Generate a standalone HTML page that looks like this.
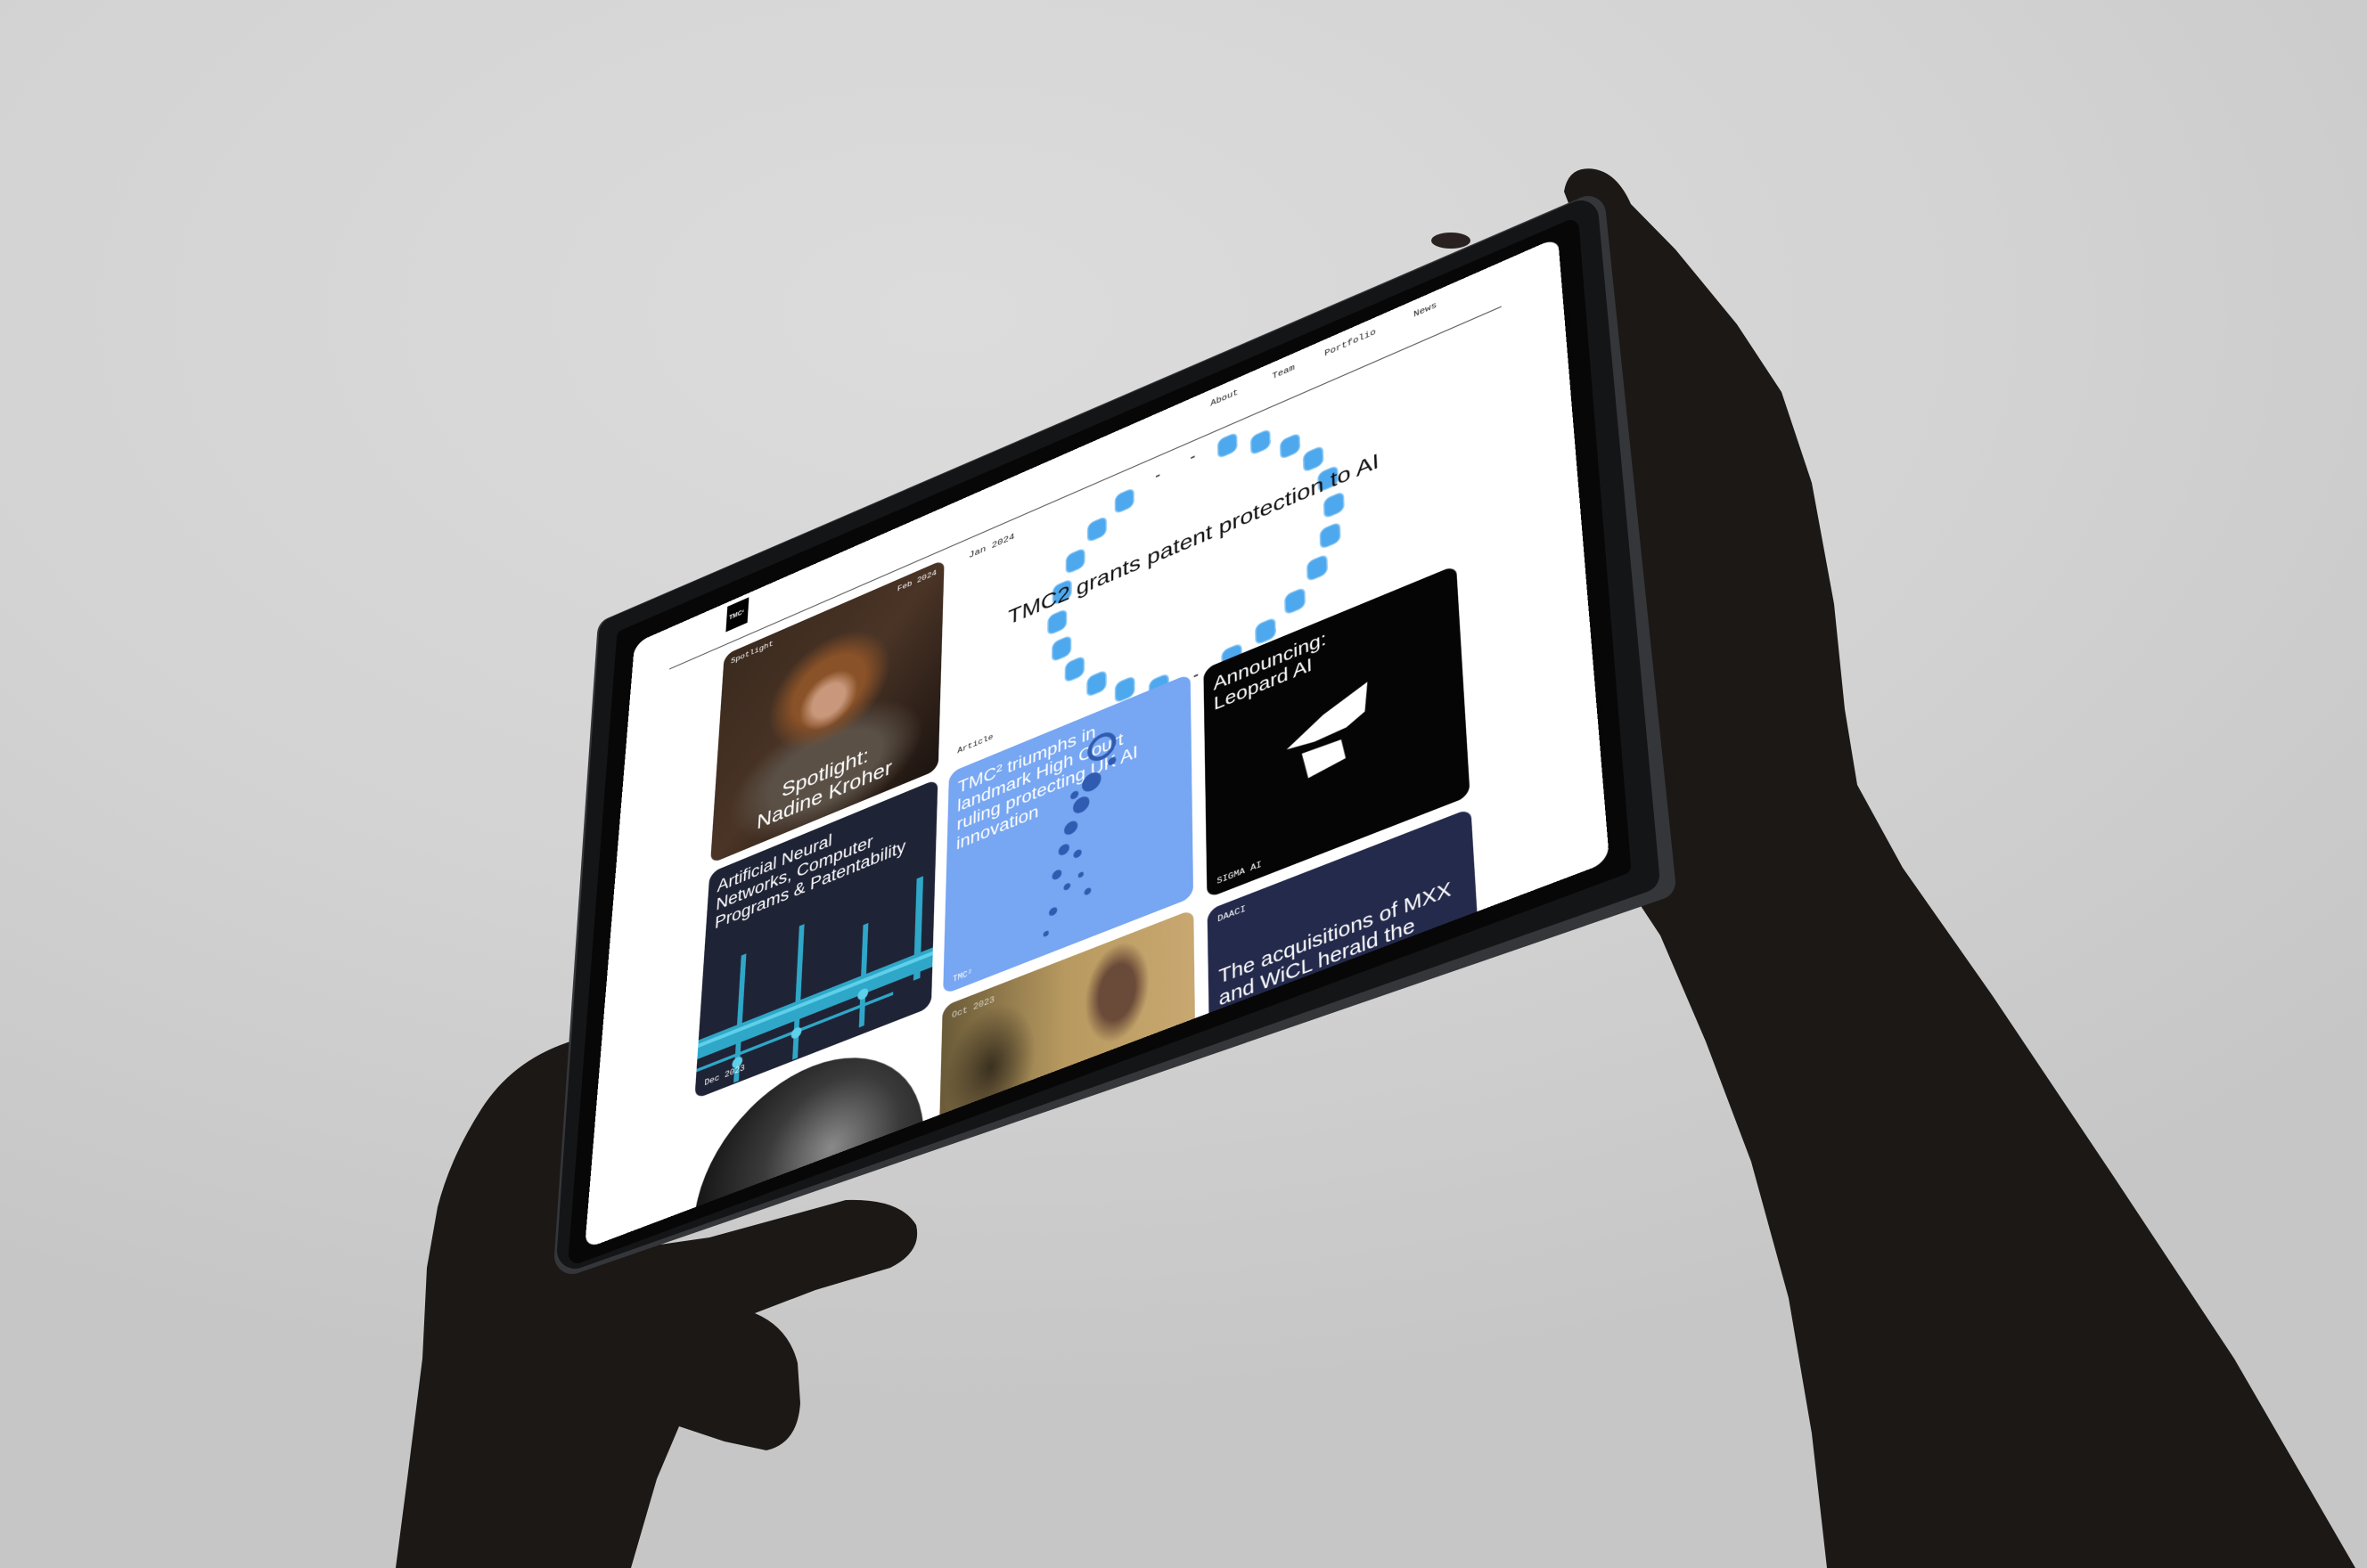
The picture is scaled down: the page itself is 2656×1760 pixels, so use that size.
<!DOCTYPE html>
<html><head><meta charset="utf-8"><style>
html,body{margin:0;padding:0;width:2656px;height:1760px;overflow:hidden;}
body{position:relative;background:radial-gradient(ellipse 80% 70% at 40% 20%,#dcdcdc 0%,#d3d3d3 55%,#c6c6c6 100%);font-family:"Liberation Sans",sans-serif;}
svg.full{position:absolute;left:0;top:0;}
#scr{position:absolute;left:0;top:0;width:1440px;height:1000px;transform-origin:0 0;
transform:matrix3d(0.61177,-0.33305,0,-0.0000616,-0.11810,0.54729,0,-0.00009466,0,0,1,0,712,722,0,1);
background:#fff;overflow:hidden;border-radius:22px;}
.m{font-family:"Liberation Mono",monospace;position:absolute;font-size:15px;color:#222;}
.card{position:absolute;border-radius:16px;overflow:hidden;}
.t{position:absolute;color:#fff;font-size:27px;line-height:1.12;}
.w{color:#fff;}
</style></head><body>
<svg class="full" width="2656" height="1760">
<path fill="#1c1816" d="M1755,215 Q1760,185 1790,190 Q1815,195 1830,229 L1880,280 L1949,364 L1999,440 L2033,542 L2058,678 L2070,796 L2084,881 L2135,974 L2236,1118 L2372,1321 L2507,1525 L2643,1760 L2050,1760 L2033,1609 L2007,1457 L1965,1304 L1914,1169 L1863,1050 L1830,1000 L1796,678 L1770,254 Z"/>
<ellipse cx="1628" cy="270" rx="22" ry="9" fill="#2a2220"/>
<path fill="#1c1816" d="M444,1760 L457,1660 L474,1525 L479,1423 L491,1355 Q505,1300 540,1245 Q575,1190 640,1169 L652,1287 L678,1406 L796,1389 L949,1347 Q1010,1345 1028,1375 Q1035,1405 999,1423 L915,1448 L847,1474 Q885,1490 895,1530 L898,1575 Q895,1620 860,1628 L813,1618 L762,1601 L737,1660 L708,1760 Z"/>
<polygon fill="#34363a" stroke="#34363a" stroke-width="40" stroke-linejoin="round" points="690,712 1782,240 1860,990 642,1410"/>
<polygon fill="#141517" stroke="#141517" stroke-width="40" stroke-linejoin="round" points="692,712 1774,245 1842,982 645,1404"/>
<polygon fill="#070707" stroke="#070707" stroke-width="20" stroke-linejoin="round" points="702,716 1762,257 1820,972 648,1408"/>
</svg>
<div id="scr">
  <div style="position:absolute;left:158px;top:8px;width:36px;height:46px;background:#000;"><span style="position:absolute;left:4px;top:18px;color:#fff;font-size:10px;font-weight:bold;">TMC²</span></div>
  <div style="position:absolute;left:65px;top:76px;width:1290px;height:2px;background:#666;"></div>
  <div class="m" style="left:929px;top:18px;font-size:14px;">About</div>
  <div class="m" style="left:1022px;top:18px;font-size:14px;">Team</div>
  <div class="m" style="left:1100px;top:18px;font-size:14px;">Portfolio</div>
  <div class="m" style="left:1231px;top:18px;font-size:14px;">News</div>
  <div class="m" style="left:555px;top:100px;">Jan 2024</div>
  <svg style="position:absolute;left:0;top:0" width="1440" height="1000">
   <g fill="#4ea8ee" stroke="#8cc8f4" stroke-width="2">
    <rect x="1091" y="274" width="28" height="32" rx="9"/><rect x="1084" y="322" width="28" height="32" rx="9"/>
    <rect x="1064" y="366" width="28" height="32" rx="9"/><rect x="1031" y="405" width="28" height="32" rx="9"/>
    <rect x="988" y="434" width="28" height="32" rx="9"/><rect x="939" y="453" width="28" height="32" rx="9"/>
    <rect x="833" y="453" width="28" height="32" rx="9"/><rect x="783" y="434" width="28" height="32" rx="9"/>
    <rect x="741" y="405" width="28" height="32" rx="9"/><rect x="708" y="366" width="28" height="32" rx="9"/>
    <rect x="688" y="322" width="28" height="32" rx="9"/><rect x="681" y="274" width="28" height="32" rx="9"/>
    <rect x="688" y="226" width="28" height="32" rx="9"/><rect x="708" y="182" width="28" height="32" rx="9"/>
    <rect x="741" y="143" width="28" height="32" rx="9"/><rect x="783" y="114" width="28" height="32" rx="9"/>
    <rect x="939" y="95" width="28" height="32" rx="9"/><rect x="988" y="114" width="28" height="32" rx="9"/>
    <rect x="1031" y="143" width="28" height="32" rx="9"/><rect x="1064" y="182" width="28" height="32" rx="9"/>
    <rect x="1084" y="226" width="28" height="32" rx="9"/>
   </g>
   <g fill="#555"><rect x="845" y="110" width="6" height="3"/><rect x="898" y="104" width="6" height="3"/><rect x="898" y="474" width="6" height="3"/></g>
  </svg>
  <div style="position:absolute;left:619px;top:228px;font-size:35px;color:#111;white-space:nowrap;">TMC2 grants patent protection to AI</div>

  <div class="card" style="left:158px;top:95px;width:358px;height:360px;background:radial-gradient(ellipse 13% 13% at 50% 45%,#c9987c 0 55%,transparent 100%),radial-gradient(ellipse 32% 30% at 50% 40%,#8a5228 0 50%,transparent 85%),radial-gradient(ellipse 45% 28% at 50% 78%,#5a5046 0 55%,transparent 95%),linear-gradient(135deg,#3a2a1e,#4a3426 50%,#1c1410);">
    <div class="m w" style="left:12px;top:10px;font-size:13px;">Spotlight</div>
    <div class="m w" style="right:12px;top:10px;font-size:13px;">Feb 2024</div>
    <div class="t" style="left:0;right:0;bottom:18px;text-align:center;font-size:33px;">Spotlight:<br>Nadine Kroher</div>
  </div>
  <div class="card" style="left:158px;top:470px;width:358px;height:362px;background:#1f2336;">
    <div class="t" style="left:14px;top:14px;font-size:27px;">Artificial Neural<br>Networks, Computer<br>Programs &amp; Patentability</div>
    <svg style="position:absolute;left:0;top:150px" width="358" height="212">
      <g fill="#2fa7c8"><rect x="0" y="120" width="358" height="30"/><rect x="60" y="10" width="8" height="200"/><rect x="150" y="0" width="8" height="210"/><rect x="250" y="40" width="8" height="160"/><rect x="330" y="0" width="10" height="160"/><rect x="0" y="165" width="300" height="5"/></g>
      <g fill="#5fd0ea"><rect x="0" y="126" width="358" height="6"/><circle cx="64" cy="180" r="8"/><circle cx="154" cy="170" r="8"/><circle cx="254" cy="150" r="8"/></g>
    </svg>
    <div class="m w" style="left:14px;bottom:12px;font-size:13px;">Dec 2023</div>
  </div>
  <div style="position:absolute;left:170px;top:852px;width:340px;height:340px;border-radius:50%;background:radial-gradient(circle at 60% 40%,#8a8a8a 0,#3a3a3a 35%,#161616 70%);"></div>

  <div class="m" style="left:545px;top:430px;font-size:13px;">Article</div>
  <div class="card" style="left:533px;top:468px;width:360px;height:352px;background:#77a6f2;">
    <div class="t" style="left:14px;top:16px;font-size:27px;">TMC² triumphs in<br>landmark High Court<br>ruling protecting UK AI<br>innovation</div>
    <svg style="position:absolute;left:0;top:0" width="360" height="352"><g fill="#2f5cb0">
      <circle cx="230" cy="60" r="18" fill="none" stroke="#2f5cb0" stroke-width="6"/><circle cx="215" cy="110" r="14"/><circle cx="200" cy="140" r="12"/><circle cx="185" cy="170" r="10"/><circle cx="175" cy="200" r="8"/><circle cx="195" cy="215" r="6"/><circle cx="165" cy="235" r="7"/><circle cx="180" cy="260" r="5"/><circle cx="160" cy="290" r="6"/><circle cx="200" cy="250" r="4"/><circle cx="210" cy="280" r="5"/><circle cx="150" cy="320" r="4"/><circle cx="245" cy="90" r="6"/><circle cx="190" cy="120" r="6"/></g></svg>
    <div class="m w" style="left:14px;bottom:10px;font-size:12px;">TMC²</div>
  </div>
  <div class="card" style="left:533px;top:838px;width:360px;height:200px;background:radial-gradient(ellipse 14% 40% at 70% 40%,#6a4a38 0 50%,transparent 90%),radial-gradient(ellipse 20% 50% at 20% 60%,#3a3020 0,transparent 90%),linear-gradient(90deg,#6a5a38,#b89a60 50%,#c8a870);">
    <div class="m w" style="left:14px;top:12px;font-size:13px;opacity:.7;">Oct 2023</div>
  </div>

  <div class="card" style="left:912px;top:470px;width:358px;height:360px;background:#050505;">
    <div class="t" style="left:14px;top:16px;font-size:29px;">Announcing:<br>Leopard AI</div>
    <svg style="position:absolute;left:115px;top:125px" width="130" height="120" viewBox="0 0 100 90"><polygon fill="#fff" points="0,42 40,18 88,0 84,34 64,44 30,46"/><polygon fill="#fff" points="16,54 58,56 62,80 22,86"/></svg>
    <div class="m w" style="left:14px;bottom:12px;font-size:13px;">SIGMA AI</div>
  </div>
  <div class="card" style="left:912px;top:848px;width:358px;height:200px;background:#242a4c;">
    <div class="m w" style="left:14px;top:12px;font-size:13px;">DAACI</div>
    <div class="t" style="left:14px;top:90px;font-size:29px;">The acquisitions of MXX<br>and WiCL herald the</div>
  </div>
</div>
</body></html>
